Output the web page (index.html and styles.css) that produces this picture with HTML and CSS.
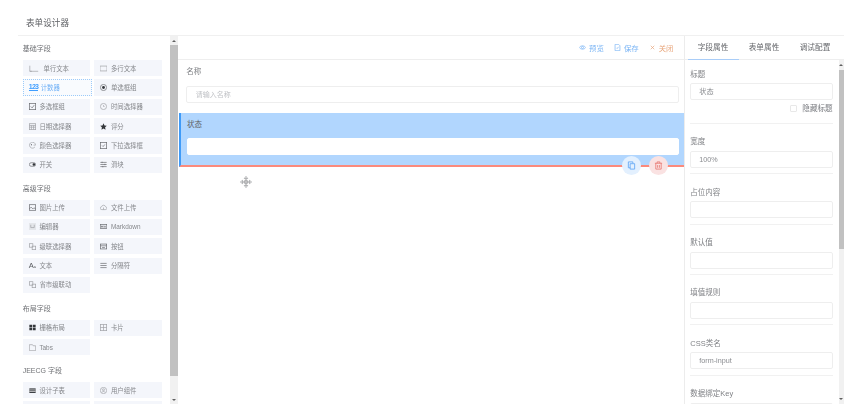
FILE: index.html
```html
<!DOCTYPE html>
<html lang="zh-CN">
  <head>
    <meta charset="utf-8" />
    <title>表单设计器</title>
    <link rel="stylesheet" href="styles.css">
  </head>

  <body>
    <div class="page">
      <div class="title">表单设计器</div>
      <div class="main">

        <!-- left: field palette -->
        <div class="palette">
          <div class="palette-inner">
            <div class="group-title">基础字段</div>
            <div class="items">
              <div class="item"><svg class="ico wide" viewBox="0 0 14 10"><path d="M1 1v8h12M1 9h3" /></svg>单行文本</div>
              <div class="item"><svg class="ico" viewBox="0 0 10 10"><rect x="0" y="1.500" width="10" height="7" /></svg>多行文本</div>
              <div class="item active"><span class="num">123</span>计数器</div>
              <div class="item"><svg class="ico dark" viewBox="0 0 10 10"><circle cx="5" cy="5" r="4.400" /><circle class="fill" cx="5" cy="5" r="2" /></svg>单选框组</div>
              <div class="item"><svg class="ico dark" viewBox="0 0 10 10"><rect x=".5" y=".5" width="9" height="9" /><path d="M2.500 5l2 2 3-4" /></svg>多选框组</div>
              <div class="item"><svg class="ico" viewBox="0 0 10 10"><circle cx="5" cy="5" r="4.400" /><path d="M5 3v2h1.500" /></svg>时间选择器</div>
              <div class="item"><svg class="ico" viewBox="0 0 10 10"><rect x=".5" y="1" width="9" height="8.500" /><path d="M.5 3.500h9M.5 6h9M3.500 3.500v6M6.500 3.500v6" /></svg>日期选择器</div>
              <div class="item"><svg class="ico" viewBox="0 0 10 10"><path class="fill" d="M5 .5l1.400 3 3.300.4-2.400 2.300.6 3.300L5 8 2.100 9.500l.6-3.300L.3 3.900l3.300-.4z" /></svg>评分</div>
              <div class="item"><svg class="ico" viewBox="0 0 10 10"><path d="M8.500 7A4.300 4.300 0 1 1 9.300 4.500H6.500" /><circle class="fill" cx="3.500" cy="4" r=".8" /></svg>颜色选择器</div>
              <div class="item"><svg class="ico dark" viewBox="0 0 10 10"><rect x=".5" y=".5" width="9" height="9" /><path d="M3 5l1.500 1.500L7 3.500" /></svg>下拉选择框</div>
              <div class="item"><svg class="ico dark" viewBox="0 0 10 10"><rect x=".5" y="2.500" width="9" height="5" rx="2.500" /><circle class="fill" cx="7" cy="5" r="1.800" /></svg>开关</div>
              <div class="item"><svg class="ico dark" viewBox="0 0 10 10"><path d="M.5 2h9M.5 5h9M.5 8h9M3 1v2M7 4v2M4 7v2" /></svg>滑块</div>
            </div>

            <div class="group-title">高级字段</div>
            <div class="items">
              <div class="item"><svg class="ico dark" viewBox="0 0 10 10"><rect x=".5" y="1" width="9" height="8" /><path d="M.5 7l2.500-2.500L5.500 7 7 5.500 9.500 7" /></svg>图片上传</div>
              <div class="item"><svg class="ico" viewBox="0 0 10 10"><path d="M2.500 8a2 2 0 0 1-.3-4A3 3 0 0 1 8 4a2 2 0 0 1-.5 4zM5 8V5" /></svg>文件上传</div>
              <div class="item"><svg class="ico" viewBox="0 0 10 10"><rect class="soft" x="0" y="0" width="10" height="10" /><path d="M2.500 2.500v4h5v-4" /></svg>编辑器</div>
              <div class="item"><svg class="ico dark" viewBox="0 0 10 10"><rect x=".3" y="2" width="9.400" height="6" /><path d="M2 6.500V4l1 1 1-1v2.500M6 4v2.500M7.500 4v2.500" /></svg>Markdown</div>
              <div class="item"><svg class="ico" viewBox="0 0 10 10"><rect x=".5" y="1" width="5" height="5" /><rect x="4.500" y="4.500" width="5" height="5" /></svg>级联选择器</div>
              <div class="item"><svg class="ico dark" viewBox="0 0 10 10"><rect x=".5" y="1.500" width="9" height="7" /><path d="M.5 4h9M3 6.500h4" /></svg>按钮</div>
              <div class="item"><span class="glyph">A<small>a</small></span>文本</div>
              <div class="item"><svg class="ico dark" viewBox="0 0 10 10"><path d="M.5 2h9M.5 5h9M.5 8h9" /></svg>分隔符</div>
              <div class="item"><svg class="ico" viewBox="0 0 10 10"><rect x=".5" y="1" width="5" height="5" /><rect x="4.500" y="4.500" width="5" height="5" /></svg>省市级联动</div>
            </div>

            <div class="group-title">布局字段</div>
            <div class="items">
              <div class="item"><svg class="ico" viewBox="0 0 10 10"><path class="fill" d="M.5 1h4v3.500h-4zM5.500 1h4v3.500h-4zM.5 5.500h4V9h-4zM5.500 5.500h4V9h-4z" /></svg>栅格布局</div>
              <div class="item"><svg class="ico" viewBox="0 0 10 10"><rect x=".5" y=".5" width="9" height="9" /><path d="M.5 5h9M5 .5v9" /></svg>卡片</div>
              <div class="item"><svg class="ico" viewBox="0 0 10 10"><path d="M.5 9.500V1h4.500l1 1.500h3.500v7z" /></svg>Tabs</div>
            </div>

            <div class="group-title">JEECG 字段</div>
            <div class="items">
              <div class="item"><svg class="ico" viewBox="0 0 10 10"><path class="fill" d="M.5 2h9v6.500h-9z" /><path class="white" d="M.5 4.200h9M.5 6.300h9" /></svg>设计子表</div>
              <div class="item"><svg class="ico" viewBox="0 0 10 10"><circle cx="5" cy="5" r="4.500" /><circle cx="5" cy="4" r="1.400" /><path d="M2.800 7.800c.6-2 3.800-2 4.400 0" /></svg>用户组件</div>
              <div class="item"></div>
              <div class="item"></div>
            </div>
          </div>
          <div class="scroll left-scroll">
            <span class="arrow up"></span>
            <span class="thumb"></span>
            <span class="arrow down"></span>
          </div>
        </div>

        <!-- center: canvas -->
        <div class="canvas">
          <div class="toolbar">
            <span class="tool blue"><svg class="tool-ico" viewBox="0 0 10 10"><path d="M.5 5C2.500 1.800 7.500 1.800 9.500 5 7.500 8.200 2.500 8.200.5 5z" /><circle cx="5" cy="5" r="1.500" /></svg>预览</span>
            <span class="tool blue"><svg class="tool-ico" viewBox="0 0 10 10"><path d="M1.500.5h5l2 2v7h-7zM3.500 5.500l1 1 2-2.500" /></svg>保存</span>
            <span class="tool orange"><svg class="tool-ico" viewBox="0 0 10 10"><path d="M2.500 2.500l5 5M7.500 2.500l-5 5" /></svg>关闭</span>
          </div>
          <div class="form-row">
            <div class="form-label">名称</div>
            <div class="form-input placeholder">请输入名称</div>
          </div>
          <div class="form-row selected">
            <div class="form-label">状态</div>
            <div class="form-input"></div>
            <span class="round copy"><svg viewBox="0 0 10 10"><path d="M1.500 1h5v1.500M1.500 1v6.500h2M3.500 3h5v6h-5z" /></svg></span>
            <span class="round del"><svg viewBox="0 0 10 10"><path d="M1 2.500h8M3.500 2.500V1h3v1.500M2 2.500V9h6V2.500M4 4.500v3M6 4.500v3" /></svg></span>
          </div>
          <svg class="move" viewBox="0 0 14 14"><path d="M7 .5l2 2.500H5zM7 13.500L5 11h4zM.5 7L3 5v4zM13.500 7L11 9V5z" /><circle cx="7" cy="7" r="2.200" /><path d="M7 3v8M3 7h8" /></svg>
        </div>

        <!-- right: properties -->
        <div class="props">
          <div class="tabs">
            <span class="tab on">字段属性</span>
            <span class="tab">表单属性</span>
            <span class="tab">调试配置</span>
          </div>
          <div class="props-body">
            <div class="fields">
              <div class="field first">
                <div class="field-label">标题</div>
                <div class="field-input">状态</div>
                <div class="hide-title"><span class="check"></span>隐藏标题</div>
              </div>
              <div class="field">
                <div class="field-label">宽度</div>
                <div class="field-input">100%</div>
              </div>
              <div class="field">
                <div class="field-label">占位内容</div>
                <div class="field-input"></div>
              </div>
              <div class="field">
                <div class="field-label">默认值</div>
                <div class="field-input"></div>
              </div>
              <div class="field">
                <div class="field-label">填值规则</div>
                <div class="field-input"></div>
              </div>
              <div class="field">
                <div class="field-label">CSS类名</div>
                <div class="field-input">form-input</div>
              </div>
              <div class="field">
                <div class="field-label">数据绑定Key</div>
                <div class="field-input"></div>
              </div>
            </div>
            <div class="scroll right-scroll">
              <span class="arrow up"></span>
              <span class="thumb"></span>
              <span class="arrow down"></span>
            </div>
          </div>
        </div>

      </div>
    </div>
  </body>
</html>
```

FILE: styles.css
```css
html, body {
  margin: 0;
  height: 100%;
  overflow: hidden;
  background: #ffffff;
}

body {
  font-family: "Liberation Sans", "Noto Sans CJK SC", sans-serif;
  font-size: 7.500px;
  color: #7a7c80;
}

.page {
  width: 844px;
  height: 404px;
  padding-left: 18px;
  box-sizing: border-box;
  display: flex;
  flex-direction: column;
  filter: blur(0.45px);
}

.title {
  height: 35px;
  line-height: 46px;
  padding-left: 8px;
  font-size: 8.600px;
  color: #606266;
  border-bottom: 1px solid #f0f0f0;
  flex: none;
}

.main {
  flex: 1;
  display: flex;
  min-height: 0;
}

/* left palette */
.palette {
  width: 160px;
  flex: none;
  display: flex;
  overflow: hidden;
}

.palette-inner {
  width: 152px;
  flex: none;
  padding-left: 4.700px;
  box-sizing: border-box;
}

.group-title {
  height: 24px;
  line-height: 26px;
  font-size: 7px;
  color: #6f7175;
}

.items {
  display: grid;
  grid-template-columns: 67.400px 67.700px;
  grid-auto-rows: 16.200px;
  gap: 3.150px 4.200px;
  margin-bottom: 2.700px;
}

.item {
  background: #f4f6fb;
  display: flex;
  align-items: center;
  padding-left: 6px;
  gap: 3.700px;
  font-size: 6.400px;
  color: #85878b;
  white-space: nowrap;
}

.item.active {
  color: #6fb0f6;
  background: #f9fbfe;
  outline: 1px dotted #9ccbfa;
  outline-offset: -1px;
  margin-right: -1.700px;
}

.num {
  width: 9px;
  margin-right: -0.700px;
  font-size: 7px;
  font-weight: bold;
  letter-spacing: -0.700px;
  color: #409eff;
  border-bottom: 1px solid #409eff;
  line-height: 7px;
}

.glyph {
  width: 7px;
  font-size: 7.500px;
  color: #55585c;
  white-space: nowrap;
}

.glyph small {
  font-size: 4px;
}

.ico {
  width: 7px;
  height: 7px;
  flex: none;
  fill: none;
  stroke: #a0a2a6;
  stroke-width: 1;
}

.ico.wide {
  width: 10px;
  margin-right: 1px;
}

.ico.dark {
  stroke: #6a6c70;
}

.ico .fill {
  fill: #33363a;
  stroke: none;
}

.ico .soft {
  fill: #e4e6ea;
  stroke: none;
}

.ico .white {
  stroke: #ffffff;
}

/* fake browser scrollbars */
.scroll {
  flex: none;
  display: flex;
  flex-direction: column;
  background: #f1f1f1;
}

.scroll .thumb {
  flex: none;
  background: #c1c1c1;
}

.arrow {
  height: 9px;
  flex: none;
  display: flex;
  align-items: center;
  justify-content: center;
}

.arrow::before {
  content: "";
  border-left: 2px solid transparent;
  border-right: 2px solid transparent;
}

.arrow.up::before {
  border-bottom: 2.500px solid #606060;
}

.arrow.down::before {
  border-top: 2.500px solid #606060;
}

.arrow.down {
  margin-top: auto;
}

.left-scroll {
  width: 8px;
}

.left-scroll .thumb {
  height: 331px;
}

/* center */
.canvas {
  width: 507px;
  flex: none;
  position: relative;
  border-right: 1px solid #ececec;
  box-sizing: border-box;
}

.toolbar {
  height: 24px;
  border-bottom: 1px solid #eeeeee;
  box-sizing: border-box;
  display: flex;
  justify-content: flex-end;
  align-items: center;
  gap: 10px;
  padding-right: 10.500px;
}

.tool {
  display: flex;
  align-items: center;
  gap: 3px;
  font-size: 7.400px;
}

.tool.blue {
  color: #7db6f5;
}

.tool.orange {
  color: #e8a67c;
}

.tool-ico {
  width: 7px;
  height: 7px;
  fill: none;
  stroke: currentColor;
  stroke-width: 1;
}

.form-row {
  padding: 6px 5.500px 0 8.300px;
  height: 53px;
  box-sizing: border-box;
  position: relative;
}

.form-label {
  height: 19.700px;
  line-height: 12px;
  font-size: 7.500px;
  color: #7d7f83;
}

.form-input {
  height: 17px;
  border: 1px solid #eeeeee;
  border-radius: 2px;
  background: #ffffff;
  box-sizing: border-box;
  line-height: 15px;
  padding-left: 8.500px;
}

.placeholder {
  color: #c0c2c6;
  font-size: 7px;
}

.selected {
  height: 54.300px;
  margin-left: 1px;
  background: #b1d6fe;
  border-left: 2px solid #3f9bf8;
  border-bottom: 2px solid #fb8a7c;
  padding-left: 6px;
}

.selected .form-label {
  height: 19.300px;
  color: #5f6368;
}

.selected .form-input {
  border-color: #ffffff;
}

.round {
  position: absolute;
  bottom: -9.500px;
  width: 19px;
  height: 19px;
  border-radius: 50%;
  display: flex;
  align-items: center;
  justify-content: center;
}

.round svg {
  width: 9px;
  height: 9px;
  fill: none;
  stroke-width: 0.9;
}

.copy {
  right: 43px;
  background: #e3f0fe;
}

.copy svg {
  stroke: #5aa4f5;
}

.del {
  right: 16px;
  background: #fae2e2;
}

.del svg {
  stroke: #e8766f;
}

.move {
  position: absolute;
  left: 62px;
  top: 140px;
  width: 12px;
  height: 12px;
  fill: #ffffff;
  stroke: #8f9194;
  stroke-width: 0.8;
}

/* right */
.props {
  flex: 1;
  min-width: 0;
  display: flex;
  flex-direction: column;
}

.tabs {
  height: 24px;
  flex: none;
  display: flex;
  border-bottom: 1px solid #eeeeee;
  box-sizing: border-box;
  padding-left: 2.500px;
}

.tab {
  width: 51px;
  text-align: center;
  line-height: 24px;
  font-size: 7.650px;
  color: #66686c;
}

.tab.on {
  height: 24px;
  border-bottom: 1px solid #a9cdf8;
  box-sizing: border-box;
}

.props-body {
  flex: 1;
  min-height: 0;
  display: flex;
}

.fields {
  flex: 1;
  min-width: 0;
  padding: 0 6px 0 5.300px;
  overflow: hidden;
}

.field {
  padding-top: 12.500px;
  height: 50.400px;
  box-sizing: border-box;
  border-bottom: 1px solid #f1f1f1;
}

.field.first {
  height: 63.800px;
  padding-top: 8.800px;
}

.field-label {
  height: 14.500px;
  line-height: 11px;
  color: #808286;
}

.field-input {
  height: 17px;
  border: 1px solid #eeeeee;
  border-radius: 2px;
  box-sizing: border-box;
  line-height: 15px;
  padding-left: 8px;
  font-size: 7.200px;
  color: #8a8c90;
}

.hide-title {
  display: flex;
  justify-content: flex-end;
  align-items: center;
  gap: 5.500px;
  margin-top: 4.700px;
  line-height: 8px;
  font-size: 7.600px;
}

.check {
  width: 7px;
  height: 7px;
  border: 1px solid #e8e8e8;
  border-radius: 1px;
  box-sizing: border-box;
}

.right-scroll {
  width: 5.300px;
}

.right-scroll .arrow {
  height: 9.500px;
}

.right-scroll .thumb {
  height: 179.500px;
}
```
